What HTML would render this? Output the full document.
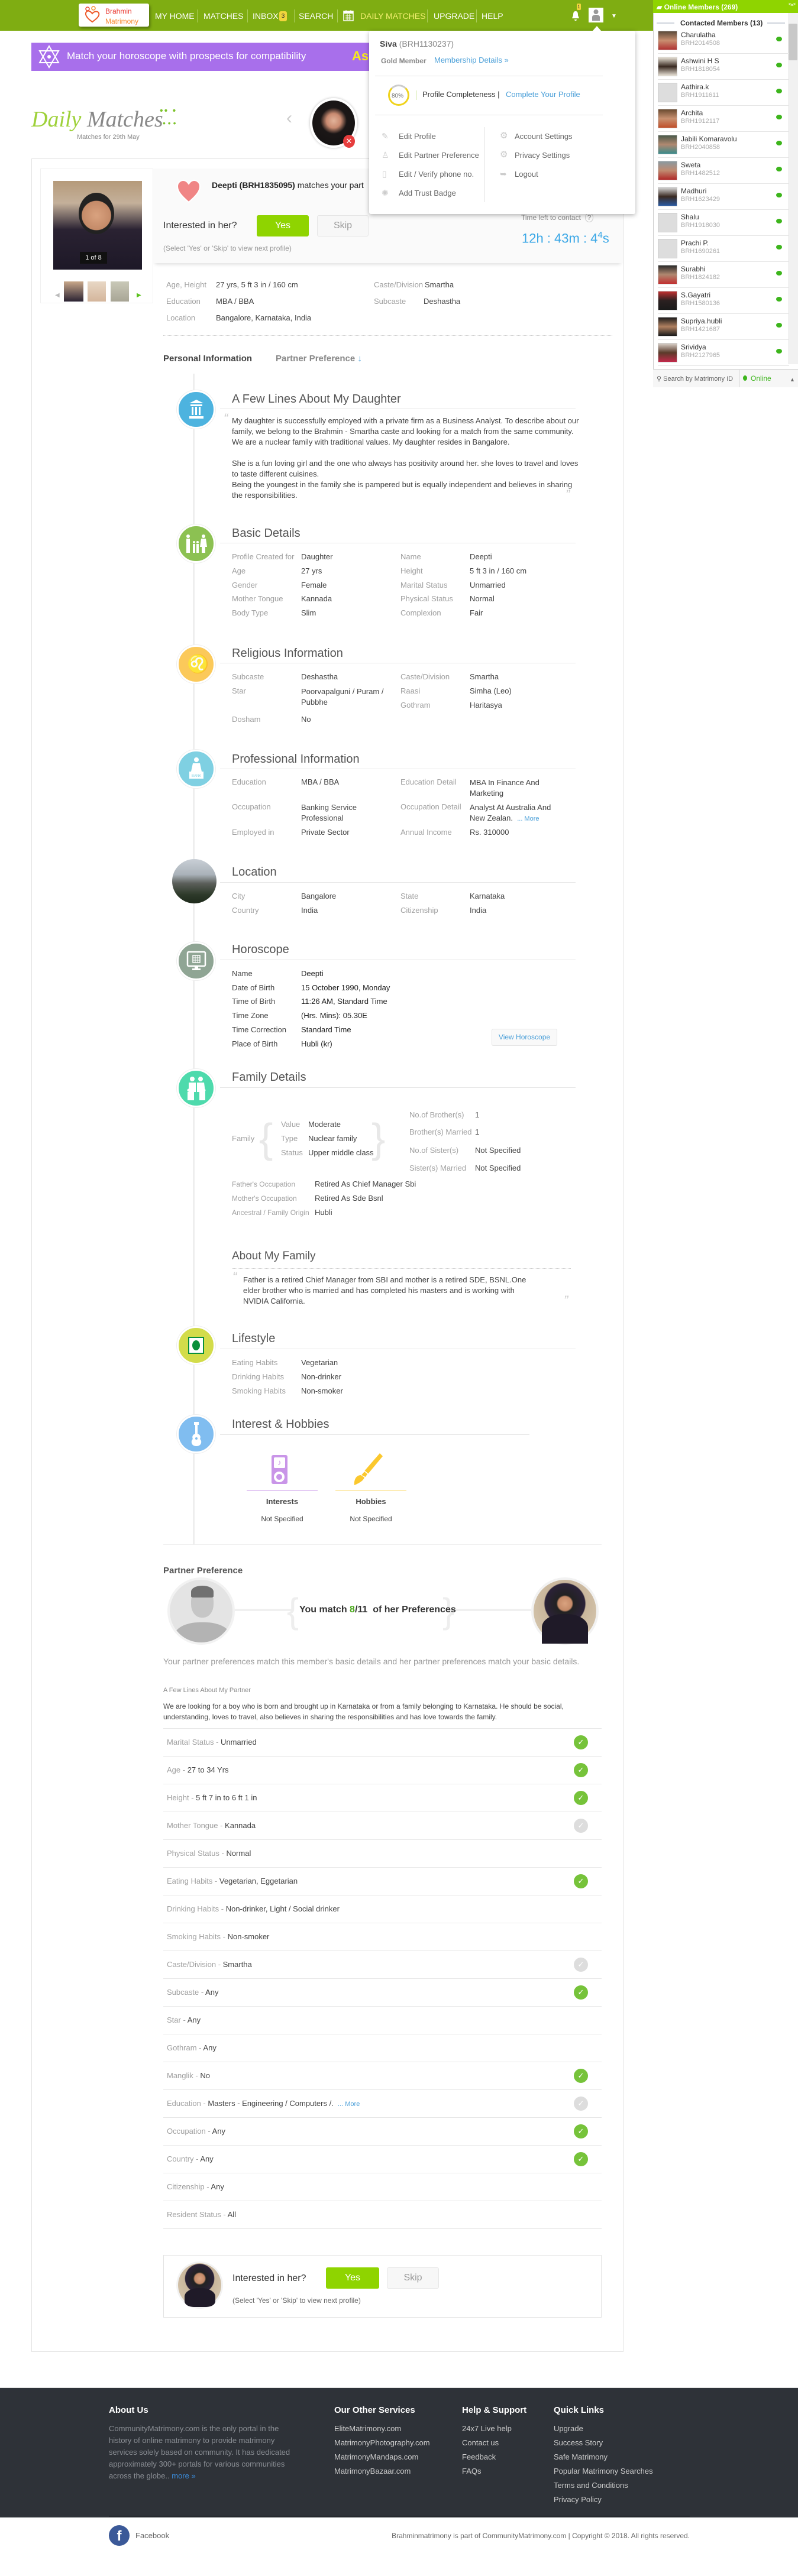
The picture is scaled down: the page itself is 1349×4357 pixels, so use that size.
<!DOCTYPE html>
<html><head><meta charset="utf-8">
<style>
*{margin:0;padding:0;box-sizing:border-box}
html,body{width:1349px;height:4357px;background:#fff;font-family:"Liberation Sans",Arial,sans-serif;color:#444;overflow:hidden;position:relative}
.a{position:absolute;white-space:nowrap;font-size:13px;line-height:16px}
.l{color:#a0a0a0}
.v{color:#444}
.h{position:absolute;font-size:20px;line-height:24px;color:#555;white-space:nowrap}
.ul{position:absolute;left:372px;width:601px;height:1px;background:#e6e6e6}
.circ{position:absolute;left:299px;width:65px;height:65px;border-radius:50%;border:3px solid #fff;box-shadow:0 0 0 1px #eee}
.nav{position:absolute;top:19px;color:#fff;font-size:14px;line-height:16px;white-space:nowrap}
.sep{position:absolute;top:16px;width:1px;height:22px;background:#a9cc5a}
.mem{position:absolute;left:1104px;width:230px;height:44px}
.mem .ph{position:absolute;left:8px;top:0;width:33px;height:33px;border:1px solid #ccc}
.mem .n{position:absolute;left:47px;top:0;font-size:12px;color:#333}
.mem .i{position:absolute;left:47px;top:15px;font-size:11px;color:#aaa}
.mem .d{position:absolute;left:208px;top:10px;width:10px;height:8px;border-radius:50%;background:#3db51c}
.mem .s{position:absolute;left:8px;right:0;top:38px;height:1px;background:#e6e6e6}
.pr{position:absolute;left:276px;width:741px;height:47px;border-top:1px solid #e8e8e8}
.pr>span{position:absolute;left:6px;top:15px;font-size:13px;white-space:nowrap}
.ck{position:absolute;left:694px;top:11px;width:24px;height:24px;border-radius:50%;background:#76c33a;color:#fff;font-size:13px;text-align:center;line-height:24px}
.ck.g{background:#ddd}
.fh{position:absolute;top:4068px;color:#fff;font-size:15px;font-weight:bold;white-space:nowrap}
.fl{position:absolute;color:#ccc;font-size:13px;white-space:nowrap}
</style></head><body>

<!-- HEADER -->
<div style="position:absolute;left:0;top:0;width:1104px;height:52px;background:#7fad12"></div>
<div style="position:absolute;left:133px;top:6px;width:119px;height:39px;background:#fff;border-radius:3px;box-shadow:2px 3px 5px rgba(0,0,0,.35)"></div>
<svg style="position:absolute;left:141px;top:10px" width="30" height="30" viewBox="0 0 30 30"><circle cx="7" cy="5" r="3" fill="none" stroke="#e8402a" stroke-width="1.5"/><circle cx="17" cy="4" r="3" fill="none" stroke="#f38a2a" stroke-width="1.5"/><path d="M15 27 C5 20 2 14 5 10 C8 7 12 9 15 13 C18 9 24 8 26 12 C28 17 22 22 15 27Z" fill="none" stroke="#ee5a2a" stroke-width="2"/></svg>
<div class="a" style="left:178px;top:11px;font-size:12px;color:#e8342b">Brahmin</div>
<div class="a" style="left:178px;top:28px;font-size:12px;color:#f7882f">Matrimony</div>
<div class="nav" style="left:262px">MY HOME</div><div class="sep" style="left:333px"></div>
<div class="nav" style="left:344px">MATCHES</div><div class="sep" style="left:418px"></div>
<div class="nav" style="left:427px">INBOX</div>
<div style="position:absolute;left:472px;top:19px;width:13px;height:17px;background:#f1d53c;border-radius:3px;font-size:10px;color:#333;text-align:center;line-height:17px">3</div>
<div class="sep" style="left:497px"></div>
<div class="nav" style="left:505px">SEARCH</div><div class="sep" style="left:570px"></div>
<svg style="position:absolute;left:580px;top:16px" width="18" height="20" viewBox="0 0 18 20"><rect x="1" y="3" width="16" height="16" fill="none" stroke="#fff" stroke-width="1.5"/><rect x="1" y="3" width="16" height="4" fill="#fff"/><path d="M5 1v4M13 1v4M4 10h10M4 13h10M4 16h10M7 8v10M11 8v10" stroke="#fff" stroke-width="1"/></svg>
<div class="nav" style="left:609px;color:#f2ef70">DAILY MATCHES</div><div class="sep" style="left:722px"></div>
<div class="nav" style="left:733px">UPGRADE</div><div class="sep" style="left:805px"></div>
<div class="nav" style="left:814px">HELP</div>
<div style="position:absolute;left:975px;top:6px;width:7px;height:11px;background:#f1d53c;border-radius:2px;font-size:8px;text-align:center;line-height:11px;color:#333">1</div>
<svg style="position:absolute;left:966px;top:18px" width="14" height="18" viewBox="0 0 14 18"><path d="M7 1C3 1 3 5 3 8L1 13H13L11 8C11 5 11 1 7 1Z M5 15a2 2 0 0 0 4 0Z" fill="#fff"/></svg>
<div style="position:absolute;left:995px;top:13px;width:25px;height:25px;background:#fff"></div>
<svg style="position:absolute;left:1000px;top:15px" width="15" height="22" viewBox="0 0 15 22"><circle cx="7.5" cy="5" r="4" fill="#999"/><path d="M1 20V14C1 11 4 10 7.5 10S14 11 14 14V20Z" fill="#999"/></svg>
<div class="a" style="left:1033px;top:20px;color:#fff;font-size:10px">▼</div>

<!-- PURPLE BANNER -->
<div style="position:absolute;left:53px;top:72px;width:572px;height:48px;background:#a86feb;border-top:1px solid #c9a5f2"></div>
<svg style="position:absolute;left:63px;top:76px" width="40" height="40" viewBox="0 0 40 40"><path d="M20 2L36 30H4Z M20 38L4 10H36Z" fill="none" stroke="#fff" stroke-width="2"/><circle cx="20" cy="20" r="3" fill="#fff"/></svg>
<div class="a" style="left:113px;top:85px;font-size:17px;line-height:20px;color:#fff">Match your horoscope with prospects for compatibility</div>
<div class="a" style="left:595px;top:83px;font-size:22px;line-height:24px;color:#f7ea1a;font-weight:bold">As</div>

<!-- DAILY MATCHES LOGO -->
<div class="a" style="left:53px;top:180px;font-size:38px;line-height:44px;font-family:'Liberation Serif',serif;font-style:italic"><span style="color:#9ed13a">Daily</span> <span style="color:#888">Matches</span></div>
<div class="a" style="left:270px;top:180px;font-size:16px;color:#7cc22a;letter-spacing:2px">•• •</div>
<div class="a" style="left:275px;top:200px;font-size:14px;color:#7cc22a">• • •</div>
<div class="a" style="left:130px;top:224px;font-size:11px;color:#888">Matches for 29th May</div>
<div class="a" style="left:484px;top:192px;font-size:30px;color:#ccc;font-weight:100">‹</div>
<div style="position:absolute;left:524px;top:166px;width:80px;height:84px;border-radius:50%;border:4px solid #fff;box-shadow:0 0 4px #bbb;background:radial-gradient(circle at 50% 45%,#e2b39a 0,#c98a70 22%,#1b1717 40%,#121010 100%)"></div>
<div style="position:absolute;left:580px;top:228px;width:20px;height:22px;border-radius:50%;background:#e63d3d;color:#fff;font-size:13px;text-align:center;line-height:22px">✕</div>

<!-- MAIN CARD -->
<div style="position:absolute;left:53px;top:268px;width:1001px;height:3710px;border:1px solid #e3e3e3"></div>
<div style="position:absolute;left:258px;top:285px;width:795px;height:160px;background:#fafafa;box-shadow:0 6px 6px -4px #ddd"></div>
<div style="position:absolute;left:68px;top:285px;width:191px;height:228px;border:1px solid #f0f0f0;background:#fff"></div>
<div style="position:absolute;left:90px;top:306px;width:150px;height:150px;background:linear-gradient(180deg,#b59a7a 0,#c4b09a 25%,#2a2232 55%,#1d1827 100%)"></div>
<div style="position:absolute;left:133px;top:326px;width:60px;height:70px;border-radius:50%;background:radial-gradient(circle at 50% 55%,#d9a27f 0,#c48a68 50%,#222 52%)"></div>
<div style="position:absolute;left:135px;top:426px;width:46px;height:20px;background:#111;color:#fff;font-size:11px;text-align:center;line-height:20px">1 of 8</div>
<div class="a" style="left:93px;top:492px;color:#bbb;font-size:10px">◀</div>
<div style="position:absolute;left:108px;top:476px;width:33px;height:34px;background:linear-gradient(#c9a88a,#2a2232)"></div>
<div style="position:absolute;left:148px;top:476px;width:31px;height:34px;background:linear-gradient(#e8d8c5,#d4b69c)"></div>
<div style="position:absolute;left:187px;top:476px;width:31px;height:34px;background:linear-gradient(#c9c9b8,#a8a595)"></div>
<div class="a" style="left:231px;top:492px;color:#5bc21d;font-size:10px">▶</div>

<svg style="position:absolute;left:297px;top:302px" width="44" height="44" viewBox="0 0 44 44"><path d="M22 40C8 28 3 21 3 13 3 7 8 3 13 3 17 3 20 6 22 9 24 6 27 3 31 3 36 3 41 7 41 13 41 21 36 28 22 40Z" fill="#f08585" stroke="#fff" stroke-width="2"/></svg>
<div class="a" style="left:358px;top:305px;font-size:14px;color:#222"><b>Deepti (BRH1835095)</b> matches your part</div>
<div class="a" style="left:276px;top:373px;font-size:16px;line-height:18px;color:#333">Interested in her?</div>
<div style="position:absolute;left:434px;top:364px;width:88px;height:36px;background:#8fd400;border-radius:3px;color:#fff;font-size:16px;text-align:center;line-height:36px">Yes</div>
<div style="position:absolute;left:536px;top:364px;width:87px;height:36px;background:#f7f7f7;border:1px solid #e6e6e6;border-radius:3px;color:#999;font-size:16px;text-align:center;line-height:34px">Skip</div>
<div class="a" style="left:276px;top:412px;font-size:12px;color:#999">(Select 'Yes' or 'Skip' to view next profile)</div>
<div class="a" style="left:881px;top:360px;font-size:12px;color:#888">Time left to contact &nbsp;<span style="border:1px solid #ccc;border-radius:50%;padding:0 3px">?</span></div>
<div class="a" style="left:882px;top:386px;font-size:22px;line-height:24px;color:#3aa7e6">12h : 43m : 4<sup style="font-size:15px">4</sup>s</div>

<div class="a l" style="left:281px;top:474px">Age, Height</div><div class="a v" style="left:365px;top:474px">27 yrs, 5 ft 3 in / 160 cm</div>
<div class="a l" style="left:632px;top:474px">Caste/Division</div><div class="a v" style="left:718px;top:474px">Smartha</div>
<div class="a l" style="left:281px;top:502px">Education</div><div class="a v" style="left:365px;top:502px">MBA / BBA</div>
<div class="a l" style="left:632px;top:502px">Subcaste</div><div class="a v" style="left:716px;top:502px">Deshastha</div>
<div class="a l" style="left:281px;top:530px">Location</div><div class="a v" style="left:365px;top:530px">Bangalore, Karnataka, India</div>
<div style="position:absolute;left:276px;top:567px;width:759px;border-top:1px dotted #ccc"></div>
<div class="a" style="left:276px;top:598px;font-size:15px;line-height:18px;color:#444;font-weight:bold">Personal Information</div>
<div class="a" style="left:466px;top:598px;font-size:15px;line-height:18px;color:#888;font-weight:bold">Partner Preference <span style="color:#4a9fd8;font-weight:normal">↓</span></div>

<!-- TIMELINE LINE -->
<div style="position:absolute;left:326px;top:632px;width:3px;height:1980px;background:#eee"></div>

<!-- A Few Lines -->
<div class="circ" style="top:660px;background:#4db3df"></div>
<svg style="position:absolute;left:316px;top:674px" width="32" height="36" viewBox="0 0 32 36"><path d="M4 8L16 2 28 8Z M6 10h20v3H6Z M8 14h3v14H8Z M14 14h3v14h-3Z M20 14h3v14h-3Z M4 30h24v4H4Z" fill="#fff"/></svg>
<div class="h" style="left:392px;top:663px">A Few Lines About My Daughter</div>
<div class="ul" style="top:691px"></div>
<div class="a" style="left:378px;top:700px;font-size:22px;color:#ccc;font-style:italic">“</div>
<div class="a v" style="left:392px;top:703px;line-height:18px">My daughter is successfully employed with a private firm as a Business Analyst. To describe about our<br>family, we belong to the Brahmin - Smartha caste and looking for a match from the same community.<br>We are a nuclear family with traditional values. My daughter resides in Bangalore.<br><br>She is a fun loving girl and the one who always has positivity around her. she loves to travel and loves<br>to taste different cuisines.<br>Being the youngest in the family she is pampered but is equally independent and believes in sharing<br>the responsibilities.</div>
<div class="a" style="left:956px;top:829px;font-size:22px;color:#ccc;font-style:italic">”</div>

<!-- Basic Details -->
<div class="circ" style="top:887px;background:#8cc152"></div>
<svg style="position:absolute;left:311px;top:903px" width="40" height="34" viewBox="0 0 40 34"><g fill="#fff"><circle cx="7" cy="4" r="3"/><rect x="4" y="8" width="6" height="24"/><circle cx="33" cy="4" r="3"/><path d="M29 8h8l2 14h-3v10h-6V22h-3Z"/><circle cx="17" cy="14" r="2"/><rect x="15" y="17" width="4" height="15"/><circle cx="23" cy="14" r="2"/><rect x="21" y="17" width="4" height="15"/></g></svg>
<div class="h" style="left:392px;top:890px">Basic Details</div>
<div class="ul" style="top:918px"></div>
<div class="a l" style="left:392px;top:934px">Profile Created for</div><div class="a v" style="left:509px;top:934px">Daughter</div><div class="a l" style="left:677px;top:934px">Name</div><div class="a v" style="left:794px;top:934px">Deepti</div>
<div class="a l" style="left:392px;top:958px">Age</div><div class="a v" style="left:509px;top:958px">27 yrs</div><div class="a l" style="left:677px;top:958px">Height</div><div class="a v" style="left:794px;top:958px">5 ft 3 in / 160 cm</div>
<div class="a l" style="left:392px;top:982px">Gender</div><div class="a v" style="left:509px;top:982px">Female</div><div class="a l" style="left:677px;top:982px">Marital Status</div><div class="a v" style="left:794px;top:982px">Unmarried</div>
<div class="a l" style="left:392px;top:1005px">Mother Tongue</div><div class="a v" style="left:509px;top:1005px">Kannada</div><div class="a l" style="left:677px;top:1005px">Physical Status</div><div class="a v" style="left:794px;top:1005px">Normal</div>
<div class="a l" style="left:392px;top:1029px">Body Type</div><div class="a v" style="left:509px;top:1029px">Slim</div><div class="a l" style="left:677px;top:1029px">Complexion</div><div class="a v" style="left:794px;top:1029px">Fair</div>

<!-- Religious -->
<div class="circ" style="top:1091px;background:#fbc95a"></div>
<div class="a" style="left:316px;top:1108px;font-size:30px;line-height:32px;color:#fff">♌</div>
<div class="h" style="left:392px;top:1093px">Religious Information</div>
<div class="ul" style="top:1121px"></div>
<div class="a l" style="left:392px;top:1137px">Subcaste</div><div class="a v" style="left:509px;top:1137px">Deshastha</div><div class="a l" style="left:677px;top:1137px">Caste/Division</div><div class="a v" style="left:794px;top:1137px">Smartha</div>
<div class="a l" style="left:392px;top:1161px">Star</div><div class="a v" style="left:509px;top:1161px;line-height:18px">Poorvapalguni / Puram /<br>Pubbhe</div><div class="a l" style="left:677px;top:1161px">Raasi</div><div class="a v" style="left:794px;top:1161px">Simha (Leo)</div>
<div class="a l" style="left:677px;top:1185px">Gothram</div><div class="a v" style="left:794px;top:1185px">Haritasya</div>
<div class="a l" style="left:392px;top:1209px">Dosham</div><div class="a v" style="left:509px;top:1209px">No</div>

<!-- Professional -->
<div class="circ" style="top:1268px;background:#7fd0e2"></div>
<svg style="position:absolute;left:318px;top:1280px" width="28" height="40" viewBox="0 0 28 40"><g fill="#fff"><circle cx="14" cy="5" r="4"/><path d="M8 11h12l3 14H5Z"/><rect x="2" y="25" width="24" height="12"/></g><text x="14" y="34" font-size="6" fill="#7fd0e2" text-anchor="middle" font-family="Liberation Sans">BANK</text></svg>
<div class="h" style="left:392px;top:1272px">Professional Information</div>
<div class="ul" style="top:1300px"></div>
<div class="a l" style="left:392px;top:1315px">Education</div><div class="a v" style="left:509px;top:1315px">MBA / BBA</div><div class="a l" style="left:677px;top:1315px">Education Detail</div><div class="a v" style="left:794px;top:1315px;line-height:18px">MBA In Finance And<br>Marketing</div>
<div class="a l" style="left:392px;top:1357px">Occupation</div><div class="a v" style="left:509px;top:1357px;line-height:18px">Banking Service<br>Professional</div><div class="a l" style="left:677px;top:1357px">Occupation Detail</div><div class="a v" style="left:794px;top:1357px;line-height:18px">Analyst At Australia And<br>New Zealan. &nbsp;<span style="color:#4a9fd8;font-size:11px">... More</span></div>
<div class="a l" style="left:392px;top:1400px">Employed in</div><div class="a v" style="left:509px;top:1400px">Private Sector</div><div class="a l" style="left:677px;top:1400px">Annual Income</div><div class="a v" style="left:794px;top:1400px">Rs. 310000</div>

<!-- Location -->
<div style="position:absolute;left:291px;top:1453px;width:75px;height:75px;border-radius:50%;background:linear-gradient(180deg,#c9cfd6 0,#aab2b9 35%,#5b5f5a 55%,#2e3a2a 80%,#1f2a1c 100%)"></div>
<div class="h" style="left:392px;top:1463px">Location</div>
<div class="ul" style="top:1492px"></div>
<div class="a l" style="left:392px;top:1508px">City</div><div class="a v" style="left:509px;top:1508px">Bangalore</div><div class="a l" style="left:677px;top:1508px">State</div><div class="a v" style="left:794px;top:1508px">Karnataka</div>
<div class="a l" style="left:392px;top:1532px">Country</div><div class="a v" style="left:509px;top:1532px">India</div><div class="a l" style="left:677px;top:1532px">Citizenship</div><div class="a v" style="left:794px;top:1532px">India</div>

<!-- Horoscope -->
<div class="circ" style="top:1593px;background:#8fa594"></div>
<svg style="position:absolute;left:315px;top:1608px" width="34" height="36" viewBox="0 0 34 36"><rect x="2" y="2" width="30" height="24" rx="2" fill="none" stroke="#fff" stroke-width="2.5"/><rect x="11" y="8" width="12" height="12" fill="none" stroke="#fff" stroke-width="1.5"/><path d="M15 8v12M19 8v12M11 12h12M11 16h12" stroke="#fff" stroke-width="1"/><path d="M14 26h6v4h4v3H10v-3h4Z" fill="#fff"/></svg>
<div class="h" style="left:392px;top:1594px">Horoscope</div>
<div class="ul" style="top:1623px"></div>
<div class="a v" style="left:392px;top:1639px">Name</div><div class="a" style="left:509px;top:1639px;color:#222">Deepti</div>
<div class="a v" style="left:392px;top:1663px">Date of Birth</div><div class="a" style="left:509px;top:1663px;color:#222">15 October 1990, Monday</div>
<div class="a v" style="left:392px;top:1686px">Time of Birth</div><div class="a" style="left:509px;top:1686px;color:#222">11:26 AM, Standard Time</div>
<div class="a v" style="left:392px;top:1710px">Time Zone</div><div class="a" style="left:509px;top:1710px;color:#222">(Hrs. Mins): 05.30E</div>
<div class="a v" style="left:392px;top:1734px">Time Correction</div><div class="a" style="left:509px;top:1734px;color:#222">Standard Time</div>
<div class="a v" style="left:392px;top:1758px">Place of Birth</div><div class="a" style="left:509px;top:1758px;color:#222">Hubli (kr)</div>
<div style="position:absolute;left:831px;top:1740px;width:111px;height:29px;border:1px solid #e3e3e3;border-radius:3px;background:#f9f9f9;color:#4a9fd8;font-size:12px;text-align:center;line-height:27px">View Horoscope</div>

<!-- Family Details -->
<div class="circ" style="top:1808px;background:#4edaac"></div>
<svg style="position:absolute;left:314px;top:1820px" width="36" height="42" viewBox="0 0 36 42"><g fill="#fff"><circle cx="11" cy="5" r="4"/><circle cx="25" cy="5" r="4"/><path d="M5 11h12v16h-3v14H8V27H5Z"/><path d="M19 11h12l2 16h-4v14h-6V27h-4Z"/><circle cx="5" cy="24" r="2.5"/><rect x="3" y="27" width="5" height="14"/><circle cx="31" cy="24" r="2.5"/><rect x="28" y="27" width="5" height="14"/></g></svg>
<div class="h" style="left:392px;top:1810px">Family Details</div>
<div class="ul" style="top:1839px"></div>
<div class="a l" style="left:392px;top:1918px">Family</div>
<div class="a" style="left:438px;top:1880px;font-size:70px;line-height:90px;color:#e8e8e8;font-weight:100">{</div>
<div class="a" style="left:628px;top:1880px;font-size:70px;line-height:90px;color:#e8e8e8;font-weight:100">}</div>
<div class="a l" style="left:475px;top:1894px">Value</div><div class="a v" style="left:521px;top:1894px">Moderate</div>
<div class="a l" style="left:475px;top:1918px">Type</div><div class="a v" style="left:521px;top:1918px">Nuclear family</div>
<div class="a l" style="left:475px;top:1942px">Status</div><div class="a v" style="left:521px;top:1942px">Upper middle class</div>
<div class="a l" style="left:692px;top:1878px">No.of Brother(s)</div><div class="a v" style="left:803px;top:1878px">1</div>
<div class="a l" style="left:692px;top:1907px">Brother(s) Married</div><div class="a v" style="left:803px;top:1907px">1</div>
<div class="a l" style="left:692px;top:1938px">No.of Sister(s)</div><div class="a v" style="left:803px;top:1938px">Not Specified</div>
<div class="a l" style="left:692px;top:1968px">Sister(s) Married</div><div class="a v" style="left:803px;top:1968px">Not Specified</div>
<div class="a l" style="left:392px;top:1995px;font-size:12px">Father's Occupation</div><div class="a v" style="left:532px;top:1995px">Retired As Chief Manager Sbi</div>
<div class="a l" style="left:392px;top:2019px;font-size:12px">Mother's Occupation</div><div class="a v" style="left:532px;top:2019px">Retired As Sde Bsnl</div>
<div class="a l" style="left:392px;top:2043px;font-size:12px">Ancestral / Family Origin</div><div class="a v" style="left:532px;top:2043px">Hubli</div>

<!-- About My Family -->
<div class="h" style="left:392px;top:2113px;font-size:19px">About My Family</div>
<div style="position:absolute;left:392px;top:2145px;width:573px;border-top:1px dotted #ccc"></div>
<div class="a" style="left:393px;top:2152px;font-size:22px;color:#ccc;font-style:italic">“</div>
<div class="a v" style="left:411px;top:2156px;line-height:18px">Father is a retired Chief Manager from SBI and mother is a retired SDE, BSNL.One<br>elder brother who is married and has completed his masters and is working with<br>NVIDIA California.</div>
<div class="a" style="left:953px;top:2192px;font-size:22px;color:#ccc;font-style:italic">”</div>

<!-- Lifestyle -->
<div class="circ" style="top:2243px;background:#d3dc4a"></div>
<div style="position:absolute;left:318px;top:2261px;width:27px;height:29px;background:#fff;border:2px solid #0a8f3a"></div>
<div style="position:absolute;left:325px;top:2267px;width:13px;height:17px;border-radius:50%;background:#0a8f3a"></div>
<div class="h" style="left:392px;top:2252px">Lifestyle</div>
<div class="ul" style="top:2281px"></div>
<div class="a l" style="left:392px;top:2297px">Eating Habits</div><div class="a v" style="left:509px;top:2297px">Vegetarian</div>
<div class="a l" style="left:392px;top:2321px">Drinking Habits</div><div class="a v" style="left:509px;top:2321px">Non-drinker</div>
<div class="a l" style="left:392px;top:2345px">Smoking Habits</div><div class="a v" style="left:509px;top:2345px">Non-smoker</div>

<!-- Interest & Hobbies -->
<div class="circ" style="top:2393px;background:#80bdf0"></div>
<svg style="position:absolute;left:318px;top:2403px" width="28" height="48" viewBox="0 0 28 48"><g fill="#fff"><rect x="12" y="2" width="4" height="22"/><rect x="10" y="2" width="8" height="5"/><path d="M14 22c-6 0-8 5-6 9-4 3-3 12 6 12s10-9 6-12c2-4 0-9-6-9Z"/></g><circle cx="14" cy="30" r="2" fill="#80bdf0"/></svg>
<div class="h" style="left:392px;top:2397px">Interest &amp; Hobbies</div>
<div class="ul" style="top:2426px;width:523px"></div>
<div style="position:absolute;left:459px;top:2461px;width:27px;height:49px;background:#c995e8;border-radius:3px"></div>
<div style="position:absolute;left:463px;top:2465px;width:19px;height:18px;background:#fff;border-radius:2px;color:#c995e8;font-size:13px;text-align:center;line-height:18px;font-weight:bold">♪</div>
<div style="position:absolute;left:463px;top:2489px;width:18px;height:18px;border:4px solid #fff;border-radius:50%"></div>
<svg style="position:absolute;left:590px;top:2455px" width="60" height="60" viewBox="0 0 60 60"><path d="M52 3L57 8 32 38 26 33Z" fill="#fbc82e"/><path d="M26 33L32 38 28 44 20 40Z" fill="#fbc82e" stroke="#fff" stroke-width="1.5"/><path d="M20 40C12 40 8 48 9 57 16 54 24 50 26 44Z" fill="#fbc82e"/></svg>
<div style="position:absolute;left:417px;top:2520px;width:120px;height:1px;background:#c995e8"></div>
<div style="position:absolute;left:567px;top:2520px;width:120px;height:1px;background:#fbd96a"></div>
<div class="a" style="left:417px;top:2532px;width:120px;text-align:center;font-weight:bold;color:#444">Interests</div>
<div class="a" style="left:567px;top:2532px;width:120px;text-align:center;font-weight:bold;color:#444">Hobbies</div>
<div class="a v" style="left:417px;top:2561px;width:120px;text-align:center;font-size:12px">Not Specified</div>
<div class="a v" style="left:567px;top:2561px;width:120px;text-align:center;font-size:12px">Not Specified</div>
<div style="position:absolute;left:276px;top:2612px;width:741px;height:1px;background:#eee"></div>

<!-- Partner Preference -->
<div class="a" style="left:276px;top:2648px;font-size:15px;line-height:18px;font-weight:bold;color:#555">Partner Preference</div>
<div style="position:absolute;left:395px;top:2721px;width:100px;height:4px;background:#f0f0f0"></div>
<div style="position:absolute;left:755px;top:2721px;width:143px;height:4px;background:#f0f0f0"></div>
<div style="position:absolute;left:283px;top:2668px;width:114px;height:114px;border-radius:50%;background:#e4e4e4;border:4px solid #f2f2f2;overflow:hidden">
<div style="position:absolute;left:36px;top:14px;width:38px;height:50px;border-radius:45%;background:#c6c6c6"></div>
<div style="position:absolute;left:36px;top:10px;width:38px;height:20px;border-radius:50% 50% 10% 10%;background:#707070"></div>
<div style="position:absolute;left:8px;top:72px;width:94px;height:50px;border-radius:45% 45% 0 0;background:#b3b3b3"></div></div>
<div class="a" style="left:485px;top:2695px;font-size:60px;line-height:60px;color:#eee;font-weight:100">{</div>
<div class="a" style="left:748px;top:2695px;font-size:60px;line-height:60px;color:#eee;font-weight:100">}</div>
<div class="a" style="left:506px;top:2713px;font-size:16px;line-height:20px;font-weight:bold;color:#333">You match <span style="color:#4aa81c">8</span>/11 &nbsp;of her Preferences</div>
<div style="position:absolute;left:898px;top:2668px;width:114px;height:114px;border-radius:50%;border:4px solid #f2f2f2;background:radial-gradient(circle at 50% 38%,#d9a27f 0,#c48a68 14%,#222 17%,#2b2238 40%,#c9b69c 42%,#ddd0b8 100%)"></div>
<div style="position:absolute;left:916px;top:2730px;width:78px;height:50px;border-radius:45% 45% 0 0;background:#1f1a28"></div>

<div class="a" style="left:276px;top:2802px;font-size:14px;color:#999">Your partner preferences match this member's basic details and her partner preferences match your basic details.</div>
<div class="a" style="left:276px;top:2851px;font-size:11px;color:#888">A Few Lines About My Partner</div>
<div class="a v" style="left:276px;top:2877px;font-size:12px;line-height:18px">We are looking for a boy who is born and brought up in Karnataka or from a family belonging to Karnataka. He should be social,<br>understanding, loves to travel, also believes in sharing the responsibilities and has love towards the family.</div>

<div class="pr" style="top:2923px"><span><span class="l">Marital Status - </span>Unmarried</span><div class="ck">✓</div></div>
<div class="pr" style="top:2970px"><span><span class="l">Age - </span>27 to 34 Yrs</span><div class="ck">✓</div></div>
<div class="pr" style="top:3017px"><span><span class="l">Height - </span>5 ft 7 in to 6 ft 1 in</span><div class="ck">✓</div></div>
<div class="pr" style="top:3064px"><span><span class="l">Mother Tongue - </span>Kannada</span><div class="ck g">✓</div></div>
<div class="pr" style="top:3111px"><span><span class="l">Physical Status - </span>Normal</span></div>
<div class="pr" style="top:3158px"><span><span class="l">Eating Habits - </span>Vegetarian, Eggetarian</span><div class="ck">✓</div></div>
<div class="pr" style="top:3205px"><span><span class="l">Drinking Habits - </span>Non-drinker, Light / Social drinker</span></div>
<div class="pr" style="top:3252px"><span><span class="l">Smoking Habits - </span>Non-smoker</span></div>
<div class="pr" style="top:3299px"><span><span class="l">Caste/Division - </span>Smartha</span><div class="ck g">✓</div></div>
<div class="pr" style="top:3346px"><span><span class="l">Subcaste - </span>Any</span><div class="ck">✓</div></div>
<div class="pr" style="top:3393px"><span><span class="l">Star - </span>Any</span></div>
<div class="pr" style="top:3440px"><span><span class="l">Gothram - </span>Any</span></div>
<div class="pr" style="top:3487px"><span><span class="l">Manglik - </span>No</span><div class="ck">✓</div></div>
<div class="pr" style="top:3534px"><span><span class="l">Education - </span>Masters - Engineering / Computers /. &nbsp;<span style="color:#4a9fd8;font-size:11px">... More</span></span><div class="ck g">✓</div></div>
<div class="pr" style="top:3581px"><span><span class="l">Occupation - </span>Any</span><div class="ck">✓</div></div>
<div class="pr" style="top:3628px"><span><span class="l">Country - </span>Any</span><div class="ck">✓</div></div>
<div class="pr" style="top:3675px"><span><span class="l">Citizenship - </span>Any</span></div>
<div class="pr" style="top:3722px"><span><span class="l">Resident Status - </span>All</span></div>
<div style="position:absolute;left:276px;top:3769px;width:741px;height:1px;background:#e8e8e8"></div>

<!-- bottom interested box -->
<div style="position:absolute;left:276px;top:3814px;width:741px;height:106px;border:1px solid #e3e3e3"></div>
<div style="position:absolute;left:298px;top:3825px;width:79px;height:80px;border-radius:50%;border:3px solid #f2f2f2;background:radial-gradient(circle at 50% 35%,#d9a27f 0,#c48a68 14%,#222 18%,#2b2238 40%,#c9b69c 42%,#ddd0b8 100%)"></div>
<div style="position:absolute;left:312px;top:3870px;width:52px;height:32px;border-radius:45% 45% 30% 30%;background:#1f1a28"></div>
<div class="a" style="left:393px;top:3845px;font-size:16px;line-height:18px;color:#333">Interested in her?</div>
<div style="position:absolute;left:551px;top:3835px;width:90px;height:36px;background:#8fd400;border-radius:3px;color:#fff;font-size:16px;text-align:center;line-height:36px">Yes</div>
<div style="position:absolute;left:654px;top:3835px;width:88px;height:36px;background:#f7f7f7;border:1px solid #e6e6e6;border-radius:3px;color:#999;font-size:16px;text-align:center;line-height:34px">Skip</div>
<div class="a" style="left:393px;top:3883px;font-size:12px;color:#666">(Select 'Yes' or 'Skip' to view next profile)</div>

<!-- FOOTER -->
<div style="position:absolute;left:0;top:4038px;width:1349px;height:220px;background:#2e3238;border-top:1px solid #ddd"></div>
<div style="position:absolute;left:184px;top:4255px;width:982px;height:2px;background:#25282d"></div>
<div class="fh" style="left:184px">About Us</div>
<div class="fh" style="left:565px">Our Other Services</div>
<div class="fh" style="left:781px">Help &amp; Support</div>
<div class="fh" style="left:936px">Quick Links</div>
<div class="fl" style="left:184px;top:4098px;line-height:20px;color:#8a8e94">CommunityMatrimony.com is the only portal in the<br>history of online matrimony to provide matrimony<br>services solely based on community. It has dedicated<br>approximately 300+ portals for various communities<br>across the globe.. <span style="color:#3b8fe0">more »</span></div>
<div class="fl" style="left:565px;top:4100px">EliteMatrimony.com</div>
<div class="fl" style="left:565px;top:4124px">MatrimonyPhotography.com</div>
<div class="fl" style="left:565px;top:4148px">MatrimonyMandaps.com</div>
<div class="fl" style="left:565px;top:4172px">MatrimonyBazaar.com</div>
<div class="fl" style="left:781px;top:4100px">24x7 Live help</div>
<div class="fl" style="left:781px;top:4124px">Contact us</div>
<div class="fl" style="left:781px;top:4148px">Feedback</div>
<div class="fl" style="left:781px;top:4172px">FAQs</div>
<div class="fl" style="left:936px;top:4100px">Upgrade</div>
<div class="fl" style="left:936px;top:4124px">Success Story</div>
<div class="fl" style="left:936px;top:4148px">Safe Matrimony</div>
<div class="fl" style="left:936px;top:4172px">Popular Matrimony Searches</div>
<div class="fl" style="left:936px;top:4196px">Terms and Conditions</div>
<div class="fl" style="left:936px;top:4220px">Privacy Policy</div>
<div style="position:absolute;left:184px;top:4271px;width:35px;height:35px;border-radius:50%;background:#3b5998;color:#fff;font-size:24px;font-weight:bold;text-align:center;line-height:38px">f</div>
<div class="a" style="left:229px;top:4281px;color:#666">Facebook</div>
<div class="a" style="left:574px;top:4281px;width:592px;text-align:right;font-size:12px;color:#666">Brahminmatrimony is part of CommunityMatrimony.com | Copyright © 2018. All rights reserved.</div>

<!-- DROPDOWN -->
<div style="position:absolute;left:624px;top:52px;width:450px;height:310px;background:#fff;border-radius:3px;box-shadow:0 2px 8px rgba(0,0,0,.3)"></div>
<div style="position:absolute;left:1002px;top:44px;width:0;height:0;border-left:7px solid transparent;border-right:7px solid transparent;border-bottom:8px solid #fff"></div>
<div class="a" style="left:642px;top:66px;font-size:14px;color:#888"><b style="color:#444">Siva</b> (BRH1130237)</div>
<div class="a" style="left:644px;top:95px;font-size:12px;color:#888;font-weight:bold">Gold Member</div>
<div class="a" style="left:734px;top:94px;font-size:13px;color:#4a9fd8">Membership Details »</div>
<div style="position:absolute;left:634px;top:128px;width:385px;height:1px;background:#e3e3e3"></div>
<div style="position:absolute;left:656px;top:143px;width:36px;height:36px;border-radius:50%;border:3px solid #f0d31c;border-top-color:#ccc"></div>
<div class="a" style="left:662px;top:155px;font-size:10px;color:#777">80%</div>
<div style="position:absolute;left:703px;top:153px;width:1px;height:16px;background:#cde89a"></div>
<div class="a" style="left:714px;top:152px;font-size:13px;color:#333">Profile Completeness |</div>
<div class="a" style="left:855px;top:152px;font-size:13px;color:#4a9fd8">Complete Your Profile</div>
<div style="position:absolute;left:634px;top:194px;width:385px;height:1px;background:#e3e3e3"></div>
<div style="position:absolute;left:819px;top:215px;width:1px;height:127px;background:#e3e3e3"></div>
<div class="a" style="left:645px;top:222px;font-size:14px;color:#ccc">✎</div><div class="a" style="left:674px;top:223px;font-size:13px;color:#666">Edit Profile</div>
<div class="a" style="left:645px;top:254px;font-size:14px;color:#ccc">♙</div><div class="a" style="left:674px;top:255px;font-size:13px;color:#666">Edit Partner Preference</div>
<div class="a" style="left:646px;top:286px;font-size:14px;color:#ccc">▯</div><div class="a" style="left:674px;top:287px;font-size:13px;color:#666">Edit / Verify phone no.</div>
<div class="a" style="left:645px;top:318px;font-size:14px;color:#ccc">✺</div><div class="a" style="left:674px;top:319px;font-size:13px;color:#666">Add Trust Badge</div>
<div class="a" style="left:845px;top:222px;font-size:15px;color:#ccc">⚙</div><div class="a" style="left:870px;top:223px;font-size:13px;color:#666">Account Settings</div>
<div class="a" style="left:845px;top:254px;font-size:15px;color:#ccc">⚙</div><div class="a" style="left:870px;top:255px;font-size:13px;color:#666">Privacy Settings</div>
<div class="a" style="left:845px;top:286px;font-size:14px;color:#ccc">➥</div><div class="a" style="left:870px;top:287px;font-size:13px;color:#666">Logout</div>

<!-- SIDEBAR -->
<div style="position:absolute;left:1104px;top:0;width:245px;height:655px;background:#fff;border-left:1px solid #ccc;border-bottom:1px solid #ccc"></div>
<div style="position:absolute;left:1104px;top:0;width:245px;height:22px;background:#8fd400"></div>
<div class="a" style="left:1110px;top:4px;font-size:12px;color:#fff;font-weight:bold">▰ Online Members (269)</div>
<div class="a" style="left:1333px;top:3px;font-size:12px;color:#fff">︾</div>
<div style="position:absolute;left:1110px;top:38px;width:30px;height:2px;background:#cfd4dc"></div>
<div style="position:absolute;left:1297px;top:38px;width:30px;height:2px;background:#cfd4dc"></div>
<div class="a" style="left:1150px;top:31px;font-size:12px;font-weight:bold;color:#333">Contacted Members (13)</div>
<div style="position:absolute;left:1332px;top:22px;width:17px;height:594px;background:#f1f1f1"></div>
<div style="position:absolute;left:1333px;top:40px;width:15px;height:62px;background:#c8c8c8;border-radius:2px"></div>

<div class="mem" style="top:52px"><div class="ph" style="background:linear-gradient(#5b4a3a,#c98e70,#b03232)"></div><div class="n">Charulatha</div><div class="i">BRH2014508</div><div class="d"></div><div class="s"></div></div>
<div class="mem" style="top:96px"><div class="ph" style="background:linear-gradient(#e8e2d6,#3a2a22,#e8e2d6)"></div><div class="n">Ashwini H S</div><div class="i">BRH1818054</div><div class="d"></div><div class="s"></div></div>
<div class="mem" style="top:140px"><div class="ph" style="background:#ddd"></div><div class="n">Aathira.k</div><div class="i">BRH1911611</div><div class="d"></div><div class="s"></div></div>
<div class="mem" style="top:184px"><div class="ph" style="background:linear-gradient(#6a4a30,#c89070,#c0502a)"></div><div class="n">Archita</div><div class="i">BRH1912117</div><div class="d"></div><div class="s"></div></div>
<div class="mem" style="top:228px"><div class="ph" style="background:linear-gradient(#4a5a4a,#b08870,#3a8a8a)"></div><div class="n">Jabili Komaravolu</div><div class="i">BRH2040858</div><div class="d"></div><div class="s"></div></div>
<div class="mem" style="top:272px"><div class="ph" style="background:linear-gradient(#8a9aa0,#c08a70,#b02828)"></div><div class="n">Sweta</div><div class="i">BRH1482512</div><div class="d"></div><div class="s"></div></div>
<div class="mem" style="top:316px"><div class="ph" style="background:linear-gradient(#d8d8d8,#3a2a22,#2a5aa0)"></div><div class="n">Madhuri</div><div class="i">BRH1623429</div><div class="d"></div><div class="s"></div></div>
<div class="mem" style="top:360px"><div class="ph" style="background:#ddd"></div><div class="n">Shalu</div><div class="i">BRH1918030</div><div class="d"></div><div class="s"></div></div>
<div class="mem" style="top:404px"><div class="ph" style="background:#ddd"></div><div class="n">Prachi P.</div><div class="i">BRH1690261</div><div class="d"></div><div class="s"></div></div>
<div class="mem" style="top:448px"><div class="ph" style="background:linear-gradient(#2a2a2a,#b08870,#c03030)"></div><div class="n">Surabhi</div><div class="i">BRH1824182</div><div class="d"></div><div class="s"></div></div>
<div class="mem" style="top:492px"><div class="ph" style="background:linear-gradient(#c03030,#2a2020,#1a1a1a)"></div><div class="n">S.Gayatri</div><div class="i">BRH1580136</div><div class="d"></div><div class="s"></div></div>
<div class="mem" style="top:536px"><div class="ph" style="background:linear-gradient(#1a1a1a,#b08060,#1a1a1a)"></div><div class="n">Supriya.hubli</div><div class="i">BRH1421687</div><div class="d"></div><div class="s"></div></div>
<div class="mem" style="top:580px"><div class="ph" style="background:linear-gradient(#d8d0c8,#5a3a2a,#c02a4a)"></div><div class="n">Srividya</div><div class="i">BRH2127965</div><div class="d"></div><div class="s"></div></div>
<div style="position:absolute;left:1104px;top:624px;width:245px;height:31px;background:#f6f6f6;border-top:1px solid #ccc"></div>
<div style="position:absolute;left:1250px;top:624px;width:1px;height:31px;background:#ddd"></div>
<div class="a" style="left:1110px;top:633px;font-size:11px;color:#666">⚲ Search by Matrimony ID</div>
<div style="position:absolute;left:1256px;top:635px;width:7px;height:9px;border-radius:50%;background:#3db51c"></div>
<div class="a" style="left:1269px;top:632px;font-size:12px;color:#3db51c">Online</div>
<div class="a" style="left:1335px;top:634px;font-size:9px;color:#666">▲</div>

</body></html>
